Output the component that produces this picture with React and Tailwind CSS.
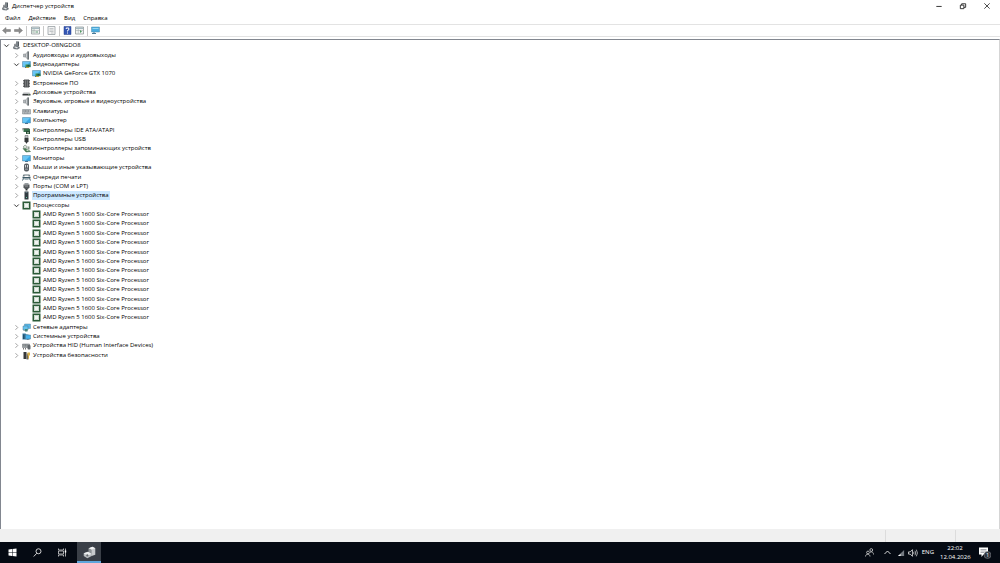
import React from 'react';

const S = ({ children, className = 'size-[9px]' }) => (
  <svg viewBox="0 0 18 18" className={`shrink-0 ${className}`} fill="none" aria-hidden="true">
    {children}
  </svg>
);

const Monitor = ({ accent = null }) => (
  <>
    <path d="M1 3h16v11H1z" fill="#37a7e5" stroke="#5c88a5" strokeWidth="1" />
    <path d="M2 4h14l-9 9H2z" fill="#69c5f4" />
    <path d="M6 14h6v2H6z" fill="#4c7390" />
    {accent}
  </>
);

const art = {
  computer: (
    <>
      <path d="M8 1h6v9l-3 2-3-2z" fill="#535a60" />
      <path d="M9 2h2v8H9z" fill="#a7adb2" />
      <path d="M2 12l4-3 8 2 2 3-5 3-8-1z" fill="#70777d" />
      <path d="M4 12l3-1 5 2-2 2z" fill="#e2e5e7" />
      <path d="M5 6l2-1v5H5z" fill="#30353a" />
    </>
  ),
  sound: (
    <>
      <path d="M3 6h4v6H3z" fill="#b4b9bc" stroke="#7c8386" />
      <path d="M7 6l5-5v16l-5-5z" fill="#c9cdd0" stroke="#7c8386" />
      <path d="M11 1h3v16h-3z" fill="#6c7377" />
    </>
  ),
  video: <Monitor accent={<><path d="M7 9h10v5H7z" fill="#3d8d4e" /><path d="M11 10h4v3h-4z" fill="#214e4b" /><path d="M8 14h6v2H8z" fill="#c4a33a" /></>} />,
  firmware: (
    <>
      <path d="M4 1h10v16H4z" fill="#55585a" />
      <path d="M2 3h3M2 6h3M2 9h3M2 12h3M2 15h3M13 3h3M13 6h3M13 9h3M13 12h3M13 15h3" stroke="#3c3f41" strokeWidth="1.5" />
      <path d="M6 3h2v12H6zM10 3h2v12h-2z" fill="#77797b" />
    </>
  ),
  disk: (
    <>
      <path d="M3 9h12l2 3H1z" fill="#b5b8ba" />
      <path d="M1 12h16v3H1z" fill="#36393c" />
      <path d="M12 13h3v1h-3z" fill="#91ca91" />
    </>
  ),
  keyboard: (
    <>
      <path d="M1 5h16v9H1z" fill="#b5babd" stroke="#777d82" />
      <path d="M3 7h12M3 9h12M4 12h10" stroke="#666d72" strokeDasharray="2 1" />
    </>
  ),
  screen: <Monitor />,
  ide: (
    <>
      <path d="M2 4h12l2 3H3z" fill="#737c76" />
      <path d="M3 6h13v6H3z" fill="#396e4c" />
      <path d="M8 10h8v6H8z" fill="#294e37" />
      <path d="M10 12h4v3h-4z" fill="#91a995" />
      <path d="M1 4v5" stroke="#777" />
    </>
  ),
  usb: (
    <>
      <path d="M6 1h6v5H6z" fill="#c7cacc" stroke="#515558" />
      <path d="M5 6h8v7l-2 2H7l-2-2z" fill="#36393b" />
      <path d="M9 14v3" stroke="#36393b" strokeWidth="2" />
    </>
  ),
  storage: (
    <>
      <path d="M2 6l4-4 4 3-3 5z" fill="#dce4dc" stroke="#5b665c" />
      <path d="M2 9l8 1 7 5-9 1z" fill="#498357" stroke="#345c3e" />
      <path d="M11 5h4v6h-4z" fill="#909b92" />
      <path d="M9 11h4v3H9z" fill="#c4d7c5" />
    </>
  ),
  mouse: (
    <>
      <rect x="4" y="1" width="10" height="16" rx="4" fill="#565b60" />
      <path d="M6 4h2v5H6zM10 4h2v5h-2z" fill="#cdd2d6" />
      <path d="M6 11h6v3H6z" fill="#888f95" />
    </>
  ),
  printer: (
    <>
      <path d="M3 3h12l2 4H1z" fill="#65747a" />
      <path d="M5 5h8v3H5z" fill="#fff" />
      <path d="M1 8h16v3H1z" fill="#3c5966" />
      <path d="M3 11l-2 4M15 11l2 4" stroke="#3c5966" strokeWidth="2" />
      <path d="M5 12h8v2H5z" fill="#a9bac1" />
    </>
  ),
  port: (
    <>
      <path d="M5 2h8v3H5z" fill="#999fa2" />
      <path d="M3 5h12v6l-3 3H6l-3-3z" fill="#555a5d" />
      <path d="M5 7h8M6 9h6" stroke="#d1d4d6" strokeDasharray="1 1" />
      <path d="M7 14h4v3H7z" fill="#333638" />
    </>
  ),
  software: (
    <>
      <path d="M5 1h8v16H5z" fill="#303a40" />
      <path d="M7 3h4v1H7z" fill="#8baab7" />
      <path d="M8 12h2v2H8z" fill="#66cba5" />
    </>
  ),
  cpu: (
    <>
      <path d="M2.500 2.500h13v13h-13z" fill="#fff" stroke="#2b5b37" strokeWidth="3" />
      <path d="M5 5h8v8H5z" fill="#f0f5f0" stroke="#9db5a2" />
    </>
  ),
  network: (
    <>
      <path d="M5 2h12v9H5z" fill="#55b6e8" stroke="#628b9f" />
      <path d="M2 6h10v8H2z" fill="#65c3ef" stroke="#4a7894" />
      <path d="M6 12h5v5H6z" fill="#3e8a75" />
      <path d="M3 15h8" stroke="#60737c" />
    </>
  ),
  system: (
    <>
      <path d="M1 3h6l2 2h4v10H1z" fill="#397ea8" />
      <path d="M7 6h10v8H7z" fill="#46b3ee" stroke="#477b98" />
      <path d="M2 5h3v9H2z" fill="#244e69" />
      <path d="M10 15h5" stroke="#426276" />
    </>
  ),
  hid: (
    <>
      <path d="M1 6h14v7H1z" fill="#a3a8ab" stroke="#646b70" />
      <path d="M3 8h9M3 10h9" stroke="#52595d" strokeDasharray="2 1" />
      <rect x="11" y="8" width="6" height="9" rx="2" fill="#62686d" />
      <path d="M3 14v3M7 14v3" stroke="#777" strokeWidth="2" />
    </>
  ),
  security: (
    <>
      <path d="M3 2h6v14H3z" fill="#36393b" />
      <path d="M9 5h4v12H9z" fill="#706a5c" />
      <path d="M11 3h5v6h-5z" fill="#dbb34b" />
      <path d="M13 9v6" stroke="#d1a83f" strokeWidth="2" />
    </>
  ),
};

const cpus = Array.from({ length: 12 }, () => [2, 'cpu', 'AMD Ryzen 5 1600 Six-Core Processor']);

const rows = [
  [0, 'computer', 'DESKTOP-O8NGDO8', true],
  [1, 'sound', 'Аудиовходы и аудиовыходы', false],
  [1, 'video', 'Видеоадаптеры', true],
  [2, 'video', 'NVIDIA GeForce GTX 1070'],
  [1, 'firmware', 'Встроенное ПО', false],
  [1, 'disk', 'Дисковые устройства', false],
  [1, 'sound', 'Звуковые, игровые и видеоустройства', false],
  [1, 'keyboard', 'Клавиатуры', false],
  [1, 'screen', 'Компьютер', false],
  [1, 'ide', 'Контроллеры IDE ATA/ATAPI', false],
  [1, 'usb', 'Контроллеры USB', false],
  [1, 'storage', 'Контроллеры запоминающих устройств', false],
  [1, 'screen', 'Мониторы', false],
  [1, 'mouse', 'Мыши и иные указывающие устройства', false],
  [1, 'printer', 'Очереди печати', false],
  [1, 'port', 'Порты (COM и LPT)', false],
  [1, 'software', 'Программные устройства', false],
  [1, 'cpu', 'Процессоры', true],
  ...cpus,
  [1, 'network', 'Сетевые адаптеры', false],
  [1, 'system', 'Системные устройства', false],
  [1, 'hid', 'Устройства HID (Human Interface Devices)', false],
  [1, 'security', 'Устройства безопасности', false],
];

const indent = ['pl-[2px]', 'pl-[12px]', 'pl-[22px]'];

function TreeRow({ row: [level, icon, label, open] }) {
  const selected = icon === 'software';
  return (
    <li
      role="treeitem"
      aria-level={level + 1}
      aria-expanded={open}
      aria-selected={selected}
      className={`flex min-h-0 items-center gap-[2px] ${indent[level]}`}
    >
      {open === undefined ? (
        <span className="w-[7px] shrink-0" />
      ) : (
        <button type="button" aria-label={open ? 'Свернуть' : 'Развернуть'} className="flex w-[7px] shrink-0 justify-center">
          <svg viewBox="0 0 14 14" className="size-[7px]" fill="none" aria-hidden="true">
            {open ? (
              <path d="M2.500 5l4.500 4.500L11.500 5" stroke="#333" strokeWidth="2" />
            ) : (
              <path d="M5 2.500L9.500 7 5 11.500" stroke="#959595" strokeWidth="1.800" />
            )}
          </svg>
        </button>
      )}
      <S>{art[icon]}</S>
      <span className={`whitespace-nowrap leading-[9px] ${selected ? '-ml-px bg-[#cce8ff] px-px' : ''}`}>{label}</span>
    </li>
  );
}

const Tool = ({ label, children }) => (
  <button type="button" aria-label={label} className="flex size-[9px] items-center justify-center">
    <S>{children}</S>
  </button>
);

const Sep = () => <span className="h-[10px] w-px bg-[#c8c8c8]" />;

const panelArt = (
  <>
    <path d="M1 2h16v14H1z" fill="#f2f4f3" stroke="#8b9497" strokeWidth="1.500" />
    <path d="M2 3h14v3H2z" fill="#a7bac1" />
    <path d="M6.500 6v9M2 9h14" stroke="#9aa4a5" />
  </>
);

function Toolbar() {
  return (
    <div role="toolbar" className="flex h-[13px] items-center gap-[3px] border-y border-[#e3e3e3] pl-[2px]">
      <Tool label="Назад"><path d="M1 9l7-6v4h9v4H8v4z" fill="#8d8d8d" stroke="#757575" /></Tool>
      <Tool label="Вперёд"><path d="M17 9l-7-6v4H1v4h9v4z" fill="#8d8d8d" stroke="#757575" /></Tool>
      <Sep />
      <span className="pl-px"><Tool label="Показать дерево">{panelArt}<path d="M3 8h2M3 11h2M3 13h2M9 11h5M9 13h5" stroke="#5f9b75" /></Tool></span>
      <Sep />
      <Tool label="Свойства">
        <path d="M2 1h14v16H2z" fill="#f4f4f4" stroke="#929a9d" strokeWidth="1.500" />
        <path d="M5 5h8M5 8h8M5 11h8M8 14h5" stroke="#929b9e" />
      </Tool>
      <Sep />
      <Tool label="Справка">
        <path d="M2 1h14v16H2z" fill="#3557b5" stroke="#263e88" />
        <path d="M6.500 6V4h5v4L9 9v2M9 13v2" stroke="#fff" strokeWidth="2" />
      </Tool>
      <Tool label="Действия">{panelArt}<path d="M10 8l4 3-4 3z" fill="#4f9a61" /></Tool>
      <Sep />
      <Tool label="Обновить конфигурацию">
        <path d="M1 2h16v10H1z" fill="#4bade0" stroke="#528dac" />
        <path d="M3 4h12v2H3z" fill="#95d6f3" />
        <path d="M2 15h8M6 12v4" stroke="#497b99" strokeWidth="2" />
      </Tool>
    </div>
  );
}

function TitleBar() {
  const btn = 'flex w-6 items-center justify-center';
  return (
    <header className="flex h-[12px] items-center pr-px">
      <span className="flex w-[12px] justify-center pr-[2px]"><S>{art.computer}</S></span>
      <h1>Диспетчер устройств</h1>
      <div className="ml-auto flex">
        <button type="button" aria-label="Свернуть окно" className={btn}>
          <S className="size-[8px]"><path d="M3 10h12" stroke="#222" strokeWidth="2" /></S>
        </button>
        <button type="button" aria-label="Восстановить" className={btn}>
          <S className="size-[8px]"><path d="M3 7h8v8H3zM6 7V4h9v8h-4" stroke="#222" strokeWidth="2" /></S>
        </button>
        <button type="button" aria-label="Закрыть" className={btn}>
          <S className="size-[8px]"><path d="M3 3l12 12M15 3L3 15" stroke="#222" strokeWidth="1.800" /></S>
        </button>
      </div>
    </header>
  );
}

function Taskbar() {
  const btn = 'flex w-[25px] items-center justify-center';
  return (
    <footer className="flex h-[21px] items-stretch bg-[#050a13] text-white">
      <button type="button" aria-label="Пуск" className={btn}>
        <S><path d="M1 3l7-1v6.500H1zM9 2l8-1v7.500H9zM1 9.500h7V16l-7-1zM9 9.500h8V17l-8-1z" fill="#fff" /></S>
      </button>
      <button type="button" aria-label="Поиск" className={btn}>
        <S><circle cx="11" cy="6.500" r="5" stroke="#e5e5e5" strokeWidth="1.800" /><path d="M7.500 10.500L1.500 17" stroke="#e5e5e5" strokeWidth="1.800" /></S>
      </button>
      <button type="button" aria-label="Представление задач" className={btn}>
        <S><path d="M1 1v3h10V1M1 17v-3h10v3M1 6h10v6H1zM15 1v16" stroke="#ddd" strokeWidth="1.500" /><path d="M13.500 5h3v4h-3z" fill="#fff" /></S>
      </button>
      <button type="button" aria-label="Диспетчер устройств" className="ml-[2px] flex w-[24px] items-center justify-center border-b-2 border-[#5fa6dc] bg-[#3a3f47] pt-[1px]">
        <S className="size-[13px]">
          <path d="M8 3l5-2 4 2v9l-5 2-4-2z" fill="#c7cacc" />
          <path d="M8 3l4 2v9l-4-2z" fill="#8d9295" />
          <path d="M8 3l5-2 4 2-5 2z" fill="#f0f1f2" />
          <path d="M1 10l6-2 5 3v3l-6 3-5-3z" fill="#b9bdc0" />
          <path d="M1 10l6-2 5 3-6 2z" fill="#eceeef" />
          <circle cx="6" cy="13" r="1.500" fill="#62676b" />
        </S>
      </button>
      <div className="ml-auto flex items-center">
        <button type="button" aria-label="Люди" className="mr-[9px]">
          <S><circle cx="6" cy="9" r="2.800" stroke="#ddd" strokeWidth="1.500" /><path d="M1 17c0-6 9-6 9 0" stroke="#ddd" strokeWidth="1.500" /><circle cx="12.500" cy="4" r="2.800" stroke="#ddd" strokeWidth="1.500" /><path d="M10 9c4-3 7 0 7 4" stroke="#ddd" strokeWidth="1.500" /></S>
        </button>
        <button type="button" aria-label="Скрытые значки" className="mr-[5px]">
          <S><path d="M3 12l6-6 6 6" stroke="#eee" strokeWidth="1.800" /></S>
        </button>
        <button type="button" aria-label="Сеть" className="mr-[3px]">
          <S className="size-[8px]"><path d="M2 16L16 2v14z" fill="#737981" /><path d="M2 16h6v-5z" fill="#fff" /></S>
        </button>
        <button type="button" aria-label="Громкость" className="mr-[4px]">
          <S className="size-[10px]"><path d="M1 7h3l4-4v12l-4-4H1z" stroke="#eee" strokeWidth="1.400" /><path d="M10 7q1.500 2 0 4M12.500 5q3 4 0 8M15 3q4 6 0 12" stroke="#ddd" strokeWidth="1.300" /></S>
        </button>
        <button type="button" className="mr-[6px]">ENG</button>
        <time className="w-[30px] text-center leading-[9px]">
          <span className="block">22:02</span>
          <span className="block">12.04.2026</span>
        </time>
        <button type="button" aria-label="Уведомления" className="ml-[8px] mr-[9px]">
          <svg viewBox="0 0 26 26" className="size-[13px]" aria-hidden="true">
            <path d="M2 3h18v14h-9l-4 5v-5H2z" fill="#fff" />
            <path d="M5 7h12M5 10h12M5 13h7" stroke="#8d9298" strokeWidth="1.500" />
            <circle cx="19" cy="18" r="7" fill="#30353d" stroke="#8a8f95" />
            <text x="19" y="22" textAnchor="middle" fontSize="11" fill="#fff">1</text>
          </svg>
        </button>
      </div>
    </footer>
  );
}

export default function App() {
  return (
    <div className="flex min-h-screen flex-col bg-white font-['Open_Sans','Noto_Sans',sans-serif] text-[6px] leading-[9px] text-black">
      <TitleBar />
      <nav className="flex h-[12px] items-center gap-[8px] pl-[5px]">
        {['Файл', 'Действие', 'Вид', 'Справка'].map((m) => (
          <button type="button" key={m}>{m}</button>
        ))}
      </nav>
      <Toolbar />
      <main className="mt-[2px] flex-1 border-x border-t border-l-[#828790] border-r-[#d5d5d5] border-t-[#828790] pt-px">
        <ul role="tree" aria-label="Устройства" className="grid h-[319px] auto-rows-fr">
          {rows.map((row, i) => <TreeRow key={i} row={row} />)}
        </ul>
      </main>
      <div role="status" className="flex h-[13px] justify-end bg-[#f0f0f0] pt-px">
        <span className="w-[70px] border-l border-[#dcdcdc]" />
        <span className="w-[45px] border-l border-[#dcdcdc]" />
      </div>
      <Taskbar />
    </div>
  );
}
